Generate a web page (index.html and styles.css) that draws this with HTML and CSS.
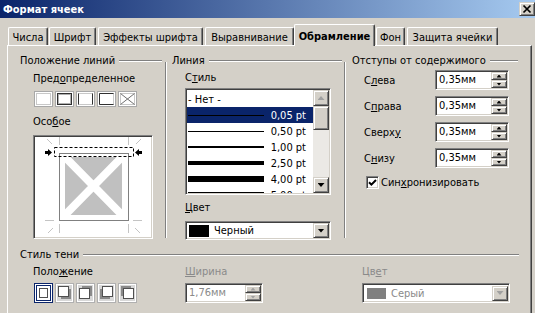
FILE: index.html
```html
<!DOCTYPE html>
<html lang="ru">
<head>
<meta charset="utf-8">
<title>Формат ячеек</title>
<link rel="stylesheet" href="styles.css">
</head>
<body>
<div class="window">
  <header class="titlebar">
    <span class="title">Формат ячеек</span>
    <span class="close btn3d">
      <svg width="14" height="12" viewBox="0 0 14 12"><path d="M3.5 2.5 L10.5 9.5 M10.5 2.5 L3.5 9.5" stroke="#000" stroke-width="1.7"/></svg>
    </span>
  </header>

  <nav class="tabs">
    <span class="tab">Числа</span>
    <span class="tab">Шрифт</span>
    <span class="tab">Эффекты шрифта</span>
    <span class="tab">Выравнивание</span>
    <span class="tab active">Обрамление</span>
    <span class="tab">Фон</span>
    <span class="tab">Защита ячейки</span>
  </nav>

  <main class="panel">
    <div class="top">
      <section class="col col1">
        <div class="hdr"><span>Положение линий</span><i class="rule"></i></div>
        <div class="lbl ind lbl-pre">Пред<u>о</u>пределенное</div>
        <div class="presets">
          <span class="preset"><svg width="19" height="16" viewBox="0 0 19 16"><rect x="0.5" y="0.5" width="18" height="15" fill="#fff" stroke="#a8a8a8"/><rect x="2.5" y="2.5" width="14" height="11" fill="none" stroke="#c8c8c8"/></svg></span>
          <span class="preset"><svg width="19" height="16" viewBox="0 0 19 16"><rect x="0.5" y="0.5" width="18" height="15" fill="#fff" stroke="#a8a8a8"/><rect x="2.5" y="2.5" width="14" height="11" fill="none" stroke="#303030"/><rect x="3.5" y="3.5" width="12" height="9" fill="none" stroke="#b0b0b0"/></svg></span>
          <span class="preset"><svg width="19" height="16" viewBox="0 0 19 16"><rect x="0.5" y="0.5" width="18" height="15" fill="#fff" stroke="#a8a8a8"/><rect x="2.5" y="2.5" width="14" height="11" fill="none" stroke="#c8c8c8"/><path d="M2.5 2.5V13.5M16.5 2.5V13.5" fill="none" stroke="#303030"/></svg></span>
          <span class="preset"><svg width="19" height="16" viewBox="0 0 19 16"><rect x="0.5" y="0.5" width="18" height="15" fill="#fff" stroke="#a8a8a8"/><rect x="2.5" y="2.5" width="14" height="11" fill="none" stroke="#c8c8c8"/><path d="M2.5 13.5V2.5H16.5M2.5 13.5H16.5" fill="none" stroke="#303030"/></svg></span>
          <span class="preset"><svg width="19" height="16" viewBox="0 0 19 16"><rect x="0.5" y="0.5" width="18" height="15" fill="#fff" stroke="#a8a8a8"/><rect x="2.5" y="2.5" width="14" height="11" fill="none" stroke="#c8c8c8"/><path d="M2.5 2.5L16.5 13.5M16.5 2.5L2.5 13.5" fill="none" stroke="#707070"/></svg></span>
        </div>
        <div class="lbl ind lbl-special">Осо<u>б</u>ое</div>
        <div class="preview sunken">
          <svg width="116" height="100" viewBox="35 137 116 100">
            <g stroke="#c4c4c4" stroke-width="1" fill="none">
              <path d="M59.5 137V145M128.5 137V145M47 139L52 144M141 139L136 144"/>
              <path d="M45 220.5H54M133 220.5H142M59.5 224V233M128.5 224V233M48 233L53 228M140 233L135 228"/>
            </g>
            <rect x="65" y="157" width="57" height="58" fill="#c0c0c0"/>
            <path d="M65 157L122 215M122 157L65 215" stroke="#fff" stroke-width="8"/>
            <rect x="59.5" y="153.5" width="69" height="67" fill="none" stroke="#000" stroke-dasharray="1 1"/>
            <rect x="54.5" y="147.5" width="79" height="9" fill="none" stroke="#000" stroke-dasharray="3 2"/>
            <path d="M45 151h3v-2l4 3.5-4 3.5v-2h-3z" fill="#000"/>
            <path d="M142 151h-3v-2l-4 3.5 4 3.5v-2h3z" fill="#000"/>
          </svg>
        </div>
      </section>

      <div class="vsep"></div>

      <section class="col col2">
        <div class="hdr"><span>Линия</span><i class="rule"></i></div>
        <div class="lbl ind lbl-style">С<u>т</u>иль</div>
        <div class="listbox sunken ind">
          <div class="rows">
            <div class="row none">- Нет -</div>
            <div class="row sel"><i class="ln ln1"></i><span class="pt">0,05 pt</span></div>
            <div class="row"><i class="ln ln1"></i><span class="pt">0,50 pt</span></div>
            <div class="row"><i class="ln ln2"></i><span class="pt">1,00 pt</span></div>
            <div class="row"><i class="ln ln4"></i><span class="pt">2,50 pt</span></div>
            <div class="row"><i class="ln ln6"></i><span class="pt">4,00 pt</span></div>
            <div class="row"><i class="ln ln7"></i><span class="pt">5,00 pt</span></div>
          </div>
          <div class="vscroll">
            <span class="sbtn btn3d"><i class="arr-up grey"></i></span>
            <span class="thumb btn3d"></span>
            <span class="track"></span>
            <span class="sbtn btn3d"><i class="arr-down"></i></span>
          </div>
        </div>
        <div class="lbl ind lbl-color"><u>Ц</u>вет</div>
        <div class="combo sunken ind">
          <i class="swatch black"></i><span class="ctext">Черный</span>
          <span class="dropbtn btn3d"><i class="arr-down"></i></span>
        </div>
      </section>

      <div class="vsep vsep2"></div>

      <section class="col col3">
        <div class="hdr"><span>Отступы от содержимого</span><i class="rule"></i></div>
        <div class="frow first">
          <span class="flabel">С<u>л</u>ева</span>
          <div class="spin sunken"><span class="val">0,35мм</span><span class="spinbtns"><b class="btn3d"><i class="sarr-up"></i></b><b class="btn3d"><i class="sarr-down"></i></b></span></div>
        </div>
        <div class="frow">
          <span class="flabel">С<u>п</u>рава</span>
          <div class="spin sunken"><span class="val">0,35мм</span><span class="spinbtns"><b class="btn3d"><i class="sarr-up"></i></b><b class="btn3d"><i class="sarr-down"></i></b></span></div>
        </div>
        <div class="frow">
          <span class="flabel">Сверх<u>у</u></span>
          <div class="spin sunken"><span class="val">0,35мм</span><span class="spinbtns"><b class="btn3d"><i class="sarr-up"></i></b><b class="btn3d"><i class="sarr-down"></i></b></span></div>
        </div>
        <div class="frow">
          <span class="flabel">С<u>н</u>изу</span>
          <div class="spin sunken"><span class="val">0,35мм</span><span class="spinbtns"><b class="btn3d"><i class="sarr-up"></i></b><b class="btn3d"><i class="sarr-down"></i></b></span></div>
        </div>
        <div class="check">
          <span class="cbox sunken"><svg width="9" height="9" viewBox="0 0 9 9"><path d="M1 4.2L3.4 6.6L8 2" fill="none" stroke="#000" stroke-width="2"/></svg></span>
          <span>Син<u>х</u>ронизировать</span>
        </div>
      </section>
    </div>

    <div class="hdr hdr-shadow"><span>Стиль тени</span><i class="rule"></i></div>

    <div class="bottom">
      <div class="sgroup g1">
        <div class="lbl">Поло<u>ж</u>ение</div>
        <div class="shadows">
          <span class="shbox"><svg width="19" height="20" viewBox="0 0 19 20"><rect x="0.5" y="0.5" width="18" height="19" fill="#fff" stroke="#0a246a"/><rect x="2.5" y="2.5" width="14" height="15" fill="#fff" stroke="#0a246a"/><rect x="5.5" y="5.5" width="8" height="9" fill="#fff" stroke="#505050"/></svg></span>
          <span class="shbox"><svg width="19" height="20" viewBox="0 0 19 20"><rect x="0.5" y="0.5" width="18" height="19" fill="#fff" stroke="#b0b0b0"/><rect x="2" y="2" width="15" height="16" fill="#d8d8d8"/><rect x="6" y="6" width="10" height="10" fill="#8a8a8a"/><rect x="3.5" y="3.5" width="10" height="10" fill="#fff" stroke="#505050"/></svg></span>
          <span class="shbox"><svg width="19" height="20" viewBox="0 0 19 20"><rect x="0.5" y="0.5" width="18" height="19" fill="#fff" stroke="#b0b0b0"/><rect x="2" y="2" width="15" height="16" fill="#d8d8d8"/><rect x="6" y="3" width="10" height="10" fill="#8a8a8a"/><rect x="3.5" y="5.5" width="10" height="10" fill="#fff" stroke="#505050"/></svg></span>
          <span class="shbox"><svg width="19" height="20" viewBox="0 0 19 20"><rect x="0.5" y="0.5" width="18" height="19" fill="#fff" stroke="#b0b0b0"/><rect x="2" y="2" width="15" height="16" fill="#d8d8d8"/><rect x="3" y="6" width="10" height="10" fill="#8a8a8a"/><rect x="5.5" y="3.5" width="10" height="10" fill="#fff" stroke="#505050"/></svg></span>
          <span class="shbox"><svg width="19" height="20" viewBox="0 0 19 20"><rect x="0.5" y="0.5" width="18" height="19" fill="#fff" stroke="#b0b0b0"/><rect x="2" y="2" width="15" height="16" fill="#d8d8d8"/><rect x="3" y="3" width="10" height="10" fill="#8a8a8a"/><rect x="5.5" y="5.5" width="10" height="10" fill="#fff" stroke="#505050"/></svg></span>
        </div>
      </div>
      <div class="sgroup g2 dis">
        <div class="lbl"><u>Ш</u>ирина</div>
        <div class="spin sunken spin-w"><span class="val">1,76мм</span><span class="spinbtns"><b class="btn3d"><i class="sarr-up grey"></i></b><b class="btn3d"><i class="sarr-down grey"></i></b></span></div>
      </div>
      <div class="sgroup g3 dis">
        <div class="lbl">Цв<u>е</u>т</div>
        <div class="combo sunken combo-sh">
          <i class="swatch grey-sw"></i><span class="ctext">Серый</span>
          <span class="dropbtn btn3d"><i class="arr-down grey"></i></span>
        </div>
      </div>
    </div>
  </main>
</div>
</body>
</html>
```

FILE: styles.css
```css
* { box-sizing: border-box; margin: 0; padding: 0; }
html, body { background: #d4d0c8; }
body {
  font-family: "DejaVu Sans Condensed", "DejaVu Sans", sans-serif;
  font-stretch: condensed;
  font-size: 11px;
  color: #000;
}
u { text-decoration: underline; text-underline-offset: 1px; }
i, b { display: block; font-style: normal; }

.window { width: 535px; height: 313px; overflow: hidden; background: #d4d0c8; }

/* 3D helpers */
.btn3d {
  background: #d4d0c8;
  border: 1px solid;
  border-color: #d4d0c8 #404040 #404040 #d4d0c8;
  box-shadow: inset 1px 1px 0 #fff, inset -1px -1px 0 #808080;
}
.sunken {
  background: #fff;
  border: 1px solid;
  border-color: #808080 #fff #fff #808080;
  box-shadow: inset 1px 1px 0 #404040, inset -1px -1px 0 #d4d0c8;
}

/* title bar */
.titlebar {
  height: 18px;
  display: flex;
  align-items: center;
  padding-left: 3px;
  background: linear-gradient(to right, #0a246a, #a6caf0);
  color: #fff;
  font-weight: bold;
}
.close {
  margin-left: auto;
  width: 16px;
  height: 14px;
  display: flex;
  align-items: center;
  justify-content: center;
}

/* tabs */
.tabs {
  height: 27px;
  display: flex;
  align-items: flex-end;
  padding-left: 8px;
}
.tab {
  height: 18px;
  padding-top: 1px;
  display: flex;
  align-items: center;
  justify-content: center;
  white-space: nowrap;
  background: #d4d0c8;
  border-top: 1px solid #fff;
  border-left: 1px solid #fff;
  border-right: 1px solid #404040;
  box-shadow: inset -1px 0 0 #808080;
  border-radius: 2px 2px 0 0;
}
.tab:nth-child(1) { width: 40px; margin-right: 1px; }
.tab:nth-child(2) { width: 47px; margin-right: 2px; }
.tab:nth-child(3) { width: 105px; margin-right: 2px; }
.tab:nth-child(4) { width: 89px; }
.tab:nth-child(5) { width: 81px; margin-right: 1px; }
.tab:nth-child(6) { width: 29px; margin-right: 2px; }
.tab:nth-child(7) { width: 91px; }
.tab.active {
  height: 22px;
  margin-bottom: -1px;
  padding-top: 3px;
  padding-bottom: 2px;
  font-weight: bold;
  position: relative;
  z-index: 1;
}

/* panel */
.panel {
  margin-left: 7px;
  width: 525px;
  height: 280px;
  padding: 8px 12px 0 12px;
  border-top: 1px solid #fff;
  border-left: 1px solid #fff;
  border-right: 1px solid #404040;
  box-shadow: inset -1px 0 0 #808080;
}
.top { display: flex; }
.col { display: flex; flex-direction: column; }
.col1 { width: 142px; }
.col2 { width: 170px; }
.col3 { width: 166px; }
.vsep {
  width: 2px;
  margin: 8px 5px 2px 3px;
  border-left: 1px solid #808080;
  border-right: 1px solid #fff;
}
.vsep2 { margin: 8px 6px 2px 2px; }

.hdr {
  height: 14px;
  line-height: 14px;
  display: flex;
  align-items: center;
  white-space: nowrap;
}
.rule {
  flex: 1;
  height: 2px;
  margin-left: 4px;
  border-top: 1px solid #808080;
  border-bottom: 1px solid #fff;
}
.lbl { height: 14px; line-height: 14px; white-space: nowrap; }
.ind { margin-left: 13px; }

/* col1 */
.lbl-pre { margin-top: 4px; }
.presets { display: flex; gap: 2px; margin: 5px 0 0 14px; height: 16px; }
.preset { display: block; width: 19px; height: 16px; }
.preset svg, .shbox svg { display: block; }
.lbl-special { margin-top: 8px; }
.preview { width: 120px; height: 104px; margin: 6px 0 0 13px; padding: 1px; }
.preview svg { display: block; }

/* col2 */
.lbl-style { margin-top: 3px; }
.listbox {
  margin-top: 3px;
  width: 146px;
  height: 107px;
  padding: 1px;
  display: flex;
  overflow: hidden;
}
.rows { width: 126px; padding-top: 1px; overflow: hidden; }
.row {
  height: 16px;
  display: flex;
  align-items: center;
  white-space: nowrap;
  padding-right: 7px;
}
.row.none { padding-left: 1px; }
.row.sel { background: #0a246a; color: #fff; }
.ln { width: 76px; margin-left: 1px; background: #000; }
.ln1 { height: 1px; }
.ln2 { height: 2px; }
.ln4 { height: 4px; }
.ln6 { height: 6px; }
.ln7 { height: 7px; }
.pt { margin-left: auto; }
.vscroll { width: 16px; display: flex; flex-direction: column; }
.sbtn { height: 16px; display: flex; align-items: center; justify-content: center; }
.thumb { height: 24px; }
.track { flex: 1; background: #ebe9e5; }

.arr-up, .arr-down { width: 7px; height: 4px; background: #000; }
.arr-up { clip-path: polygon(50% 0, 100% 100%, 0 100%); }
.arr-down { clip-path: polygon(0 0, 100% 0, 50% 100%); }
.arr-up.grey, .arr-down.grey { background: #a0a0a0; }

.lbl-color { margin-top: 6px; }
.combo {
  margin-top: 6px;
  width: 146px;
  height: 19px;
  padding: 1px;
  display: flex;
  align-items: center;
}
.swatch { width: 20px; height: 12px; margin-left: 2px; }
.black { background: #000; }
.grey-sw { background: #808080; width: 19px; height: 11px; margin-left: 3px; }
.ctext { margin-left: 5px; white-space: nowrap; }
.dropbtn {
  margin-left: auto;
  width: 16px;
  height: 15px;
  display: flex;
  align-items: center;
  justify-content: center;
}

/* col3 */
.frow { display: flex; align-items: center; height: 20px; margin-top: 6px; }
.frow.first { margin-top: 2px; }
.flabel { width: 71px; margin-left: 12px; white-space: nowrap; }
.spin {
  width: 74px;
  height: 20px;
  padding: 1px;
  display: flex;
}
.val { flex: 1; line-height: 16px; padding-left: 2px; white-space: nowrap; }
.spinbtns { width: 16px; display: flex; flex-direction: column; }
.spinbtns b { flex: 1; display: flex; align-items: center; justify-content: center; }
.sarr-up, .sarr-down { width: 5px; height: 3px; background: #000; }
.sarr-up { clip-path: polygon(50% 0, 100% 100%, 0 100%); }
.sarr-down { clip-path: polygon(0 0, 100% 0, 50% 100%); }
.sarr-up.grey, .sarr-down.grey { background: #a0a0a0; }

.check { display: flex; align-items: center; margin: 8px 0 0 14px; height: 13px; white-space: nowrap; }
.cbox {
  width: 13px;
  height: 13px;
  margin-right: 2px;
  display: flex;
  align-items: center;
  justify-content: center;
}
.cbox svg { display: block; }

/* bottom */
.hdr-shadow { margin-top: 8px; }
.bottom { display: flex; margin-top: 3px; }
.sgroup { display: flex; flex-direction: column; }
.g1 { width: 165px; padding-left: 13px; }
.g2 { width: 177px; }
.g3 { width: 148px; }
.sgroup .lbl { margin-bottom: 4px; }
.shadows { display: flex; gap: 2px; margin-left: 1px; }
.shbox { display: block; width: 19px; height: 20px; }
.dis { color: #8a8a8a; }
.spin-w { width: 78px; }
.combo-sh { margin-top: 0; width: 148px; height: 20px; }
```
